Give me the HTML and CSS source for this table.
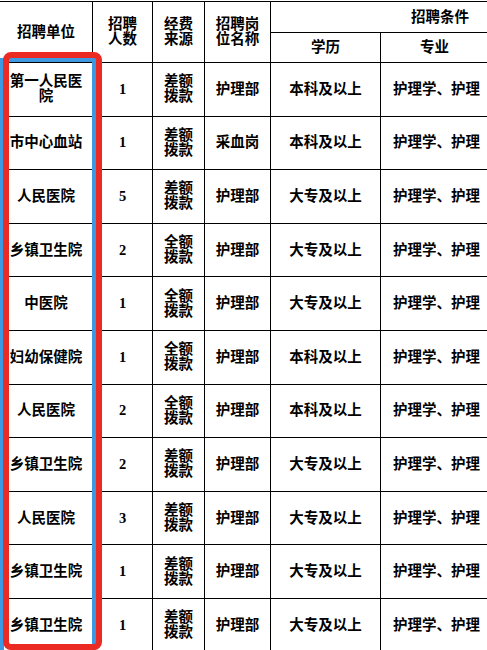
FILE: index.html
```html
<!DOCTYPE html>
<html lang="zh-CN">
<head>
<meta charset="utf-8">
<title>招聘计划</title>
<link rel="stylesheet" href="styles.css">
</head>
<body>
<div class="sheet">
  <table class="grid">
    <colgroup>
      <col class="c-unit">
      <col class="c-num">
      <col class="c-fund">
      <col class="c-post">
      <col class="c-edu">
      <col class="c-major">
    </colgroup>
    <thead>
      <tr class="h1">
        <th rowspan="2">招聘单位</th>
        <th rowspan="2">招聘<br>人数</th>
        <th rowspan="2">经费<br>来源</th>
        <th rowspan="2">招聘岗<br>位名称</th>
        <th colspan="2" class="cond">招聘条件</th>
      </tr>
      <tr class="h2">
        <th>学历</th>
        <th class="major-h">专业</th>
      </tr>
    </thead>
    <tbody>
      <tr><td>第一人民医<br>院</td><td class="num">1</td><td>差额<br>拨款</td><td>护理部</td><td>本科及以上</td><td class="major">护理学、护理</td></tr>
      <tr><td>市中心血站</td><td class="num">1</td><td>差额<br>拨款</td><td>采血岗</td><td>本科及以上</td><td class="major">护理学、护理</td></tr>
      <tr><td>人民医院</td><td class="num">5</td><td>差额<br>拨款</td><td>护理部</td><td>大专及以上</td><td class="major">护理学、护理</td></tr>
      <tr><td>乡镇卫生院</td><td class="num">2</td><td>全额<br>拨款</td><td>护理部</td><td>大专及以上</td><td class="major">护理学、护理</td></tr>
      <tr><td>中医院</td><td class="num">1</td><td>全额<br>拨款</td><td>护理部</td><td>大专及以上</td><td class="major">护理学、护理</td></tr>
      <tr><td>妇幼保健院</td><td class="num">1</td><td>全额<br>拨款</td><td>护理部</td><td>本科及以上</td><td class="major">护理学、护理</td></tr>
      <tr><td>人民医院</td><td class="num">2</td><td>全额<br>拨款</td><td>护理部</td><td>本科及以上</td><td class="major">护理学、护理</td></tr>
      <tr><td>乡镇卫生院</td><td class="num">2</td><td>差额<br>拨款</td><td>护理部</td><td>大专及以上</td><td class="major">护理学、护理</td></tr>
      <tr><td>人民医院</td><td class="num">3</td><td>差额<br>拨款</td><td>护理部</td><td>大专及以上</td><td class="major">护理学、护理</td></tr>
      <tr><td>乡镇卫生院</td><td class="num">1</td><td>差额<br>拨款</td><td>护理部</td><td>大专及以上</td><td class="major">护理学、护理</td></tr>
      <tr><td>乡镇卫生院</td><td class="num">1</td><td>差额<br>拨款</td><td>护理部</td><td>大专及以上</td><td class="major">护理学、护理</td></tr>
    </tbody>
  </table>
  <div class="sel-blue"></div>
  <div class="sel-red"></div>
</div>
</body>
</html>
```

FILE: styles.css
```css
html, body {
  margin: 0;
  padding: 0;
  background: #ffffff;
}

.sheet {
  position: relative;
  width: 487px;
  height: 650px;
  overflow: hidden;
  background: #ffffff;
}

.grid {
  border-collapse: collapse;
  table-layout: fixed;
  width: 611px;
  margin-left: -1px;
  margin-top: 1px;
  font-family: "Liberation Serif", "Noto Sans CJK SC", serif;
  font-weight: 700;
  font-size: 14.5px;
  line-height: 15px;
  color: #000000;
}

.c-unit { width: 93px; }
.c-num { width: 60px; }
.c-fund { width: 52px; }
.c-post { width: 66px; }
.c-edu { width: 110px; }
.c-major { width: 230px; }

.grid th,
.grid td {
  border: 1px solid #000000;
  padding: 0 2px;
  text-align: center;
  vertical-align: middle;
  font-weight: 700;
  white-space: nowrap;
  overflow: hidden;
}

.h1 { height: 31px; }
.h2 { height: 30px; }
.grid tbody tr { height: 53.6px; }

.grid th.cond {
  text-align: left;
  padding-left: 140px;
}

.grid th.major-h {
  text-align: left;
  padding-left: 39px;
}

.grid td.major {
  text-align: left;
  padding-left: 12px;
}

.num {
  font-family: "Liberation Serif", serif;
}

.sel-blue {
  position: absolute;
  left: 0;
  top: 58px;
  width: 96px;
  height: 600px;
  box-sizing: border-box;
  border: 4px solid #3d9ae2;
}

.sel-red {
  position: absolute;
  left: 3px;
  top: 52px;
  width: 99px;
  height: 598px;
  box-sizing: border-box;
  border: 6px solid #ec2a24;
  border-radius: 8px;
}
```
